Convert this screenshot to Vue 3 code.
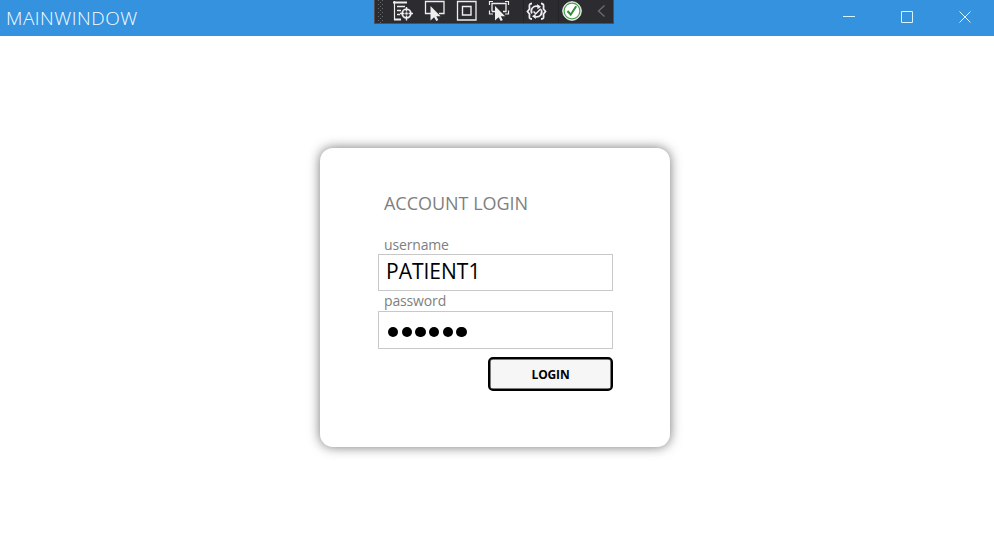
<script setup>
import { ref } from 'vue'

const username = ref('PATIENT1')
const passwordLength = ref(6)
</script>

<template>
  <div class="window">
    <header class="titlebar">
      <h1 class="title">MAINWINDOW</h1>
      <nav class="controls">
        <svg class="control" viewBox="0 0 58 36"><path d="M13 16.5h12" /></svg>
        <svg class="control" viewBox="0 0 58 36"><path d="M13.5 11.5h11v11h-11z" /></svg>
        <svg class="control" viewBox="0 0 58 36"><path d="M13.5 11.5l11 11M24.5 11.5l-11 11" /></svg>
      </nav>
      <div class="debugbar">
        <svg class="grip" viewBox="0 0 15 23">
          <g fill="#68686c">
            <template v-for="row in 6" :key="row">
              <rect x="3" :y="row * 4 - 4" width="1" height="1" />
              <rect x="7" :y="row * 4 - 4" width="1" height="1" />
              <rect x="5" :y="row * 4 - 2" width="1" height="1" />
            </template>
          </g>
        </svg>
        <svg class="tool" viewBox="0 0 32 23">
          <path d="M4.500 1v19" stroke-width="1.200" />
          <path d="M3 2.500h14M4 19.500h7" stroke-width="2.200" />
          <path d="M7 6.500h8M7 10.500h4M7 14.500h3" stroke-width="1.300" />
          <circle cx="16.500" cy="13.500" r="4.300" stroke-width="1.800" />
          <path d="M16.500 7v4.500M16.500 15.500v5M10 13.500h4.500M18.500 13.500h4.500" stroke-width="1.400" />
          <circle cx="16.500" cy="13.500" r="1.300" class="solid" />
        </svg>
        <svg class="tool" viewBox="0 0 32 23">
          <path d="M9 13.500H3.500V1.500h18.500v12H17" stroke-width="1.300" />
          <path class="solid" d="M8.500 6v14.500l3.600-3.200 2.200 3.700 2-1-2-3.700h4.300z" />
        </svg>
        <svg class="tool" viewBox="0 0 32 23">
          <path d="M3.500 1.500h18.500v18.500H3.500z" stroke-width="1.300" />
          <path d="M8.500 6.500h8.500v8.500H8.500z" stroke-width="1.400" />
        </svg>
        <svg class="tool" viewBox="0 0 32 23">
          <path d="M6 11.500V3.500h14v8h-3M6 11.500h3" stroke-width="1.300" />
          <path d="M3.500 5V1.500h3.500M19 1.500h3.500V5M3.500 10.500V14H7M22.500 10.500V14H19" stroke-width="1.200" />
          <path class="solid" d="M9 6v14.500l3.600-3.200 2.200 3.700 2-1-2-3.700h4.300z" />
        </svg>
        <svg class="tool reload" viewBox="0 0 37 23">
          <path d="M8 3.500C4.500 3.500 5.500 6 5.500 9l-2 2.500 2 2.500c0 3-1 5 2.500 5M17 3.500c3.500 0 2.500 2.500 2.500 5.500l2 2.500-2 2.500c0 3 1 5-2.500 5" stroke-width="1.800" />
          <path d="M7.800 13.500C5.800 9 9.500 5 14.500 6.500M17.200 9.500c2 4.500-1.700 8.500-6.700 7" stroke-width="1.700" />
          <path class="solid" d="M13 4l4 2.800-3.500 2.500zM12 19l-4-2.800 3.500-2.500z" />
          <path d="M9.500 11.500l2.300 2.300 5-5" stroke-width="1.500" />
        </svg>
        <svg class="tool status" viewBox="0 0 32 23">
          <circle cx="13" cy="11" r="9.300" fill="#f4fbf3" stroke="#e8f2e7" />
          <circle cx="13" cy="11" r="7.900" fill="#fff" stroke="#4a9f4e" stroke-width="1.200" />
          <path d="M8.500 11l3.200 3.700 5.500-8.500" stroke="#318c37" stroke-width="2" />
        </svg>
        <svg class="collapse" viewBox="0 0 20 23"><path d="M13.500 5.500L7.500 11l6 5.500" /></svg>
      </div>
    </header>

    <main class="content">
      <form class="card" @submit.prevent>
        <h2 class="heading">ACCOUNT LOGIN</h2>
        <label class="label user-label">username</label>
        <div class="field"><span class="value">{{ username }}</span></div>
        <label class="label pass-label">password</label>
        <div class="field password">
          <i v-for="n in passwordLength" :key="n" class="dot"></i>
        </div>
        <button class="login" type="submit"><span>LOGIN</span></button>
      </form>
    </main>
  </div>
</template>

<style>
body {
  margin: 0;
  background: #fff;
}
</style>

<style scoped>
.window {
  width: 100%;
  height: 559px;
  overflow: hidden;
  font-family: "Open Sans", "Noto Sans", sans-serif;
}
.titlebar {
  position: relative;
  display: flex;
  justify-content: space-between;
  height: 36px;
  background: #3492df;
}
.title {
  margin: 0;
  padding-left: 6px;
  font-size: 19px;
  font-weight: 300;
  line-height: 36px;
  letter-spacing: 0.5px;
  color: #f4feff;
}
.controls {
  display: flex;
  width: 164px;
}
.control {
  flex: 0 0 58px;
  height: 36px;
  fill: none;
  stroke: #d5f5ff;
}
.debugbar {
  position: absolute;
  top: 0;
  left: 374px;
  display: flex;
  box-sizing: border-box;
  width: 240px;
  height: 24px;
  border: 1px solid #514f51;
  border-top: 0;
  background: #2b2b30;
  overflow: hidden;
}
.debugbar svg {
  flex: none;
  height: 23px;
}
.grip {
  width: 15px;
}
.tool {
  width: 32px;
  fill: none;
  stroke: #eeeeef;
}
.tool .solid {
  fill: #eeeeef;
  stroke: none;
}
.reload {
  width: 37px;
  border-left: 1px solid #232328;
  margin-left: 5px;
  margin-right: -2px;
}
.status {
  margin-left: -1px;
  border-left: 1px solid #232328;
}
.collapse {
  width: 20px;
  fill: none;
  stroke: #6d6d70;
  stroke-width: 1.3;
}
.content {
  display: flex;
  justify-content: center;
  padding: 111.5px 4px 0 0;
}
.card {
  display: flex;
  flex-direction: column;
  box-sizing: border-box;
  width: 350px;
  height: 299.5px;
  padding: 43.5px 57px 0 58px;
  border-radius: 13px;
  background: #fff;
  box-shadow: 0 0 12px rgba(0, 0, 0, 0.55);
}
.heading {
  margin: 0 0 0 6px;
  font-size: 18px;
  font-weight: 400;
  line-height: 25px;
  letter-spacing: -0.02px;
  color: #7f7f7f;
  white-space: nowrap;
}
.label {
  display: block;
  height: 20px;
  margin-left: 6px;
  font-size: 14px;
  line-height: 20px;
  letter-spacing: -0.15px;
  color: #808080;
}
.user-label {
  height: 19px;
  margin-top: 19px;
}
.field {
  box-sizing: border-box;
  height: 37px;
  padding-left: 7px;
  border: 1px solid #c8c8c8;
}
.value {
  display: block;
  font-size: 21px;
  line-height: 33px;
  color: #000;
}
.password {
  display: flex;
  gap: 3.3px;
  height: 38px;
  padding: 15px 0 0 9px;
}
.dot {
  width: 10.4px;
  height: 10.4px;
  border-radius: 50%;
  background: #000;
}
.login {
  align-self: flex-end;
  box-sizing: border-box;
  width: 125px;
  height: 34px;
  margin-top: 8px;
  padding: 1px 0 0;
  border: 2px solid #000;
  box-shadow: inset 0 0 0 0.5px #000;
  border-radius: 5px;
  background: #f6f6f6;
  font-family: inherit;
  font-size: 12px;
  font-weight: 700;
  line-height: 29px;
  letter-spacing: -0.15px;
  color: #000;
}
</style>
